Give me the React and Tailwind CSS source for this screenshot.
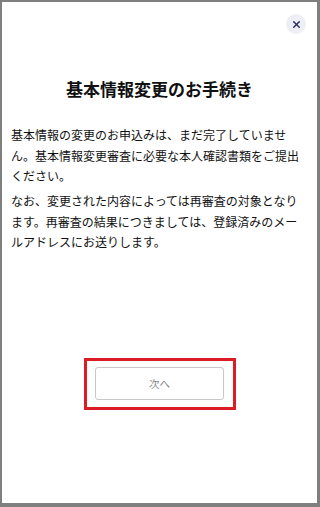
import { X } from 'lucide-react';

const font = { fontFamily: '"Noto Sans CJK JP", "Noto Sans", sans-serif' };

export default function App() {
    return (
        <div
            className="w-[320px] h-[507px] bg-[#7f7f7f] pt-[2px] pl-[2px] pr-[3px] pb-[4px]"
            style={font}
        >
            <div className="h-full bg-white flex flex-col">
                {/* close */}
                <div className="flex justify-end pt-[12px] pr-[11px]">
                    <button className="w-[20px] h-[20px] rounded-full bg-[#eeeef5] flex items-center justify-center text-[#2b2a6b]">
                        <X size={11} strokeWidth={3} />
                    </button>
                </div>

                <h1 className="mt-[43px] text-center text-[17px] leading-[24px] font-bold text-[#111]">
                    基本情報変更のお手続き
                </h1>

                <div className="mt-[24px] px-[9px] text-[12px] leading-[20.5px] text-[#111]">
                    <p className="mb-[4.5px]">
                        基本情報の変更のお申込みは、まだ完了していません。基本情報変更審査に必要な本人確認書類をご提出ください。
                    </p>
                    <p>
                        なお、変更された内容によっては再審査の対象となります。再審査の結果につきましては、登録済みのメールアドレスにお送りします。
                    </p>
                </div>

                <div className="flex-1 flex justify-center pt-[105px]">
                    <div className="w-[152px] h-[52px] border-[3px] border-[#dc1c24] flex items-center justify-center self-start">
                        <button className="w-[129px] h-[33px] border border-[#c8c8c8] rounded-[3px] bg-white text-[10.5px] text-[#888]">
                            次へ
                        </button>
                    </div>
                </div>
            </div>
        </div>
    );
}
